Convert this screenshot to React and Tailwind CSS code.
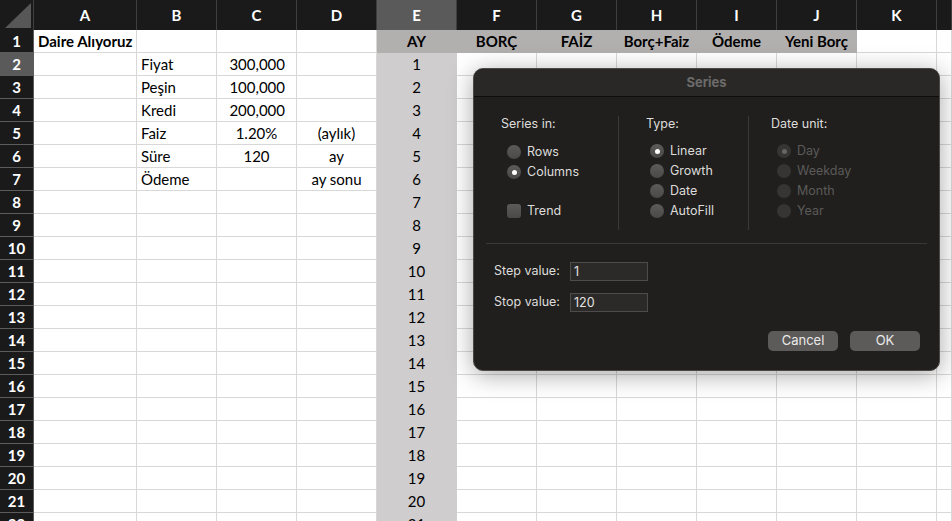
import React from "react";

const COLS = ["A", "B", "C", "D", "E", "F", "G", "H", "I", "J", "K", ""];
const HEAD = ["AY", "BORÇ", "FAİZ", "Borç+Faiz", "Ödeme", "Yeni Borç"];

// cell contents, keyed "row-col"
const cells = {
  "1-0": { t: "Daire Alıyoruz", bold: true, overflow: true },
  "2-1": { t: "Fiyat" },
  "2-2": { t: "300,000", align: "right" },
  "3-1": { t: "Peşin" },
  "3-2": { t: "100,000", align: "right" },
  "4-1": { t: "Kredi" },
  "4-2": { t: "200,000", align: "right" },
  "5-1": { t: "Faiz" },
  "5-2": { t: "1.20%", align: "center" },
  "5-3": { t: "(aylık)", align: "center" },
  "6-1": { t: "Süre" },
  "6-2": { t: "120", align: "center" },
  "6-3": { t: "ay", align: "center" },
  "7-1": { t: "Ödeme" },
  "7-3": { t: "ay sonu", align: "center" },
};

function colWidth(i) {
  if (i === 0) return "w-[103px]";
  if (i === COLS.length - 1) return "flex-1";
  return "w-[80px]";
}

function Cell({ row, col }) {
  let c = cells[`${row}-${col}`];
  let fill = "bg-white border-[#d8d8d8]";
  if (row === 1 && col >= 4 && col <= 9) {
    c = { t: HEAD[col - 4], bold: true, align: "center" };
    fill = "bg-[#b2afaf] border-[#b2afaf]";
  } else if (row >= 2 && col === 4) {
    c = { t: String(row - 1), align: "center" };
    fill = "bg-[#cfcdce] border-[#cfcdce]";
  }
  const align =
    c?.align === "right"
      ? "justify-end pr-[11px]"
      : c?.align === "center"
      ? "justify-center"
      : "justify-start pl-[4px]";
  return (
    <div
      className={`${colWidth(col)} shrink-0 h-[23px] border-r border-b flex items-center ${fill} ${align} ${
        c?.overflow ? "overflow-visible relative z-10" : "overflow-hidden"
      }`}
    >
      {c && (
        <span
          className={`whitespace-nowrap text-[15px] leading-none text-black ${
            c.bold ? "font-bold" : ""
          }`}
        >
          {c.t}
        </span>
      )}
    </div>
  );
}

function Radio({ on, dim, label }) {
  return (
    <div className="flex items-center h-[20px] gap-[6px]">
      <span
        className={`w-[14px] h-[14px] rounded-full flex items-center justify-center ${
          dim ? "bg-[#363534]" : "bg-gradient-to-b from-[#5c5b5a] to-[#4a4948]"
        }`}
      >
        {on && (
          <span
            className={`w-[5px] h-[5px] rounded-full ${
              dim ? "bg-[#676665]" : "bg-white"
            }`}
          />
        )}
      </span>
      <span className={dim ? "text-[#5b5a59]" : "text-[#dddcdb]"}>{label}</span>
    </div>
  );
}

function SeriesDialog() {
  return (
    <div className="absolute left-[473px] top-[68px] w-[467px] h-[303px] rounded-[10px] bg-[#201f1d] border border-[#4a4947] shadow-[0_4px_24px_rgba(0,0,0,0.35)] overflow-hidden font-['Inter',sans-serif] text-[12.5px]">
      <div className="h-[28px] bg-[#292826] border-b border-[#0d0d0c] flex items-center justify-center">
        <span className="font-bold text-[#6c6b6a] text-[13px]">Series</span>
      </div>
      <div className="px-[27px] pt-[19px] flex">
        <div className="w-[117px] h-[114px] flex flex-col">
          <div className="h-[16px] text-[#dddcdb] leading-[16px]">Series in:</div>
          <div className="mt-[10px] pl-[6px] flex flex-col">
            <Radio label="Rows" />
            <Radio on label="Columns" />
            <div className="flex items-center h-[20px] gap-[6px] mt-[19px]">
              <span className="w-[14px] h-[14px] rounded-[3px] bg-gradient-to-b from-[#5c5b5a] to-[#4a4948]" />
              <span className="text-[#dddcdb]">Trend</span>
            </div>
          </div>
        </div>
        <div className="w-px h-[114px] bg-[#3a3937]" />
        <div className="w-[129px] pl-[27px] h-[114px] flex flex-col">
          <div className="h-[16px] text-[#dddcdb] leading-[16px]">Type:</div>
          <div className="mt-[9px] pl-[4px] flex flex-col">
            <Radio on label="Linear" />
            <Radio label="Growth" />
            <Radio label="Date" />
            <Radio label="AutoFill" />
          </div>
        </div>
        <div className="w-px h-[114px] bg-[#3a3937]" />
        <div className="pl-[22px] h-[114px] flex flex-col">
          <div className="h-[16px] text-[#dddcdb] leading-[16px]">Date unit:</div>
          <div className="mt-[9px] pl-[6px] flex flex-col">
            <Radio on dim label="Day" />
            <Radio dim label="Weekday" />
            <Radio dim label="Month" />
            <Radio dim label="Year" />
          </div>
        </div>
      </div>
      <div className="mx-[12px] mt-[13px] h-px bg-[#3a3937]" />
      <div className="pl-[20px] pt-[18px] flex flex-col gap-[12px]">
        <div className="flex items-center">
          <span className="w-[76px] text-[#dddcdb]">Step value:</span>
          <span className="w-[78px] h-[19px] bg-[#2b2a28] border border-[#4d4c4a] text-[#e4e3e2] pl-[3px] leading-[17px]">
            1
          </span>
        </div>
        <div className="flex items-center">
          <span className="w-[76px] text-[#dddcdb]">Stop value:</span>
          <span className="w-[78px] h-[19px] bg-[#2b2a28] border border-[#4d4c4a] text-[#e4e3e2] pl-[3px] leading-[17px]">
            120
          </span>
        </div>
      </div>
      <div className="flex justify-end gap-[12px] pr-[19px] mt-[19px]">
        <button className="w-[70px] h-[20px] rounded-[5px] bg-[#5c5b5a] text-[#ebeae9] text-[13px]">
          Cancel
        </button>
        <button className="w-[70px] h-[20px] rounded-[5px] bg-[#5c5b5a] text-[#ebeae9] text-[13px]">
          OK
        </button>
      </div>
    </div>
  );
}

export default function App() {
  const rows = Array.from({ length: 22 }, (_, i) => i + 1);
  return (
    <div className="relative w-[952px] h-[521px] overflow-hidden bg-white font-['Lato',sans-serif]">
      {/* column headers */}
      <div className="flex h-[30px] bg-[#1a1a1a]">
        <div className="w-[34px] shrink-0 h-[30px] border-r border-[#3e3e3e] relative">
          <svg width="33" height="30" className="absolute left-0 top-0">
            <polygon points="31,3 31,28 5,28" fill="#575757" />
          </svg>
        </div>
        {COLS.map((c, i) => (
          <div
            key={i}
            className={`${colWidth(i)} shrink-0 h-[30px] border-r border-[#3e3e3e] flex items-center justify-center text-white font-bold text-[15px] ${
              i === 4 ? "bg-[#5a5a5a]" : ""
            }`}
          >
            {c}
          </div>
        ))}
      </div>
      {rows.map((r) => (
        <div key={r} className="flex">
          <div
            className={`w-[34px] shrink-0 h-[23px] border-r border-b border-[#5c5c5c] flex items-center justify-center text-white font-bold text-[15px] ${
              r === 2 ? "bg-[#5a5a5a]" : "bg-[#1a1a1a]"
            }`}
          >
            {r}
          </div>
          {COLS.map((_, ci) => (
            <Cell key={ci} row={r} col={ci} />
          ))}
        </div>
      ))}
      <SeriesDialog />
    </div>
  );
}
